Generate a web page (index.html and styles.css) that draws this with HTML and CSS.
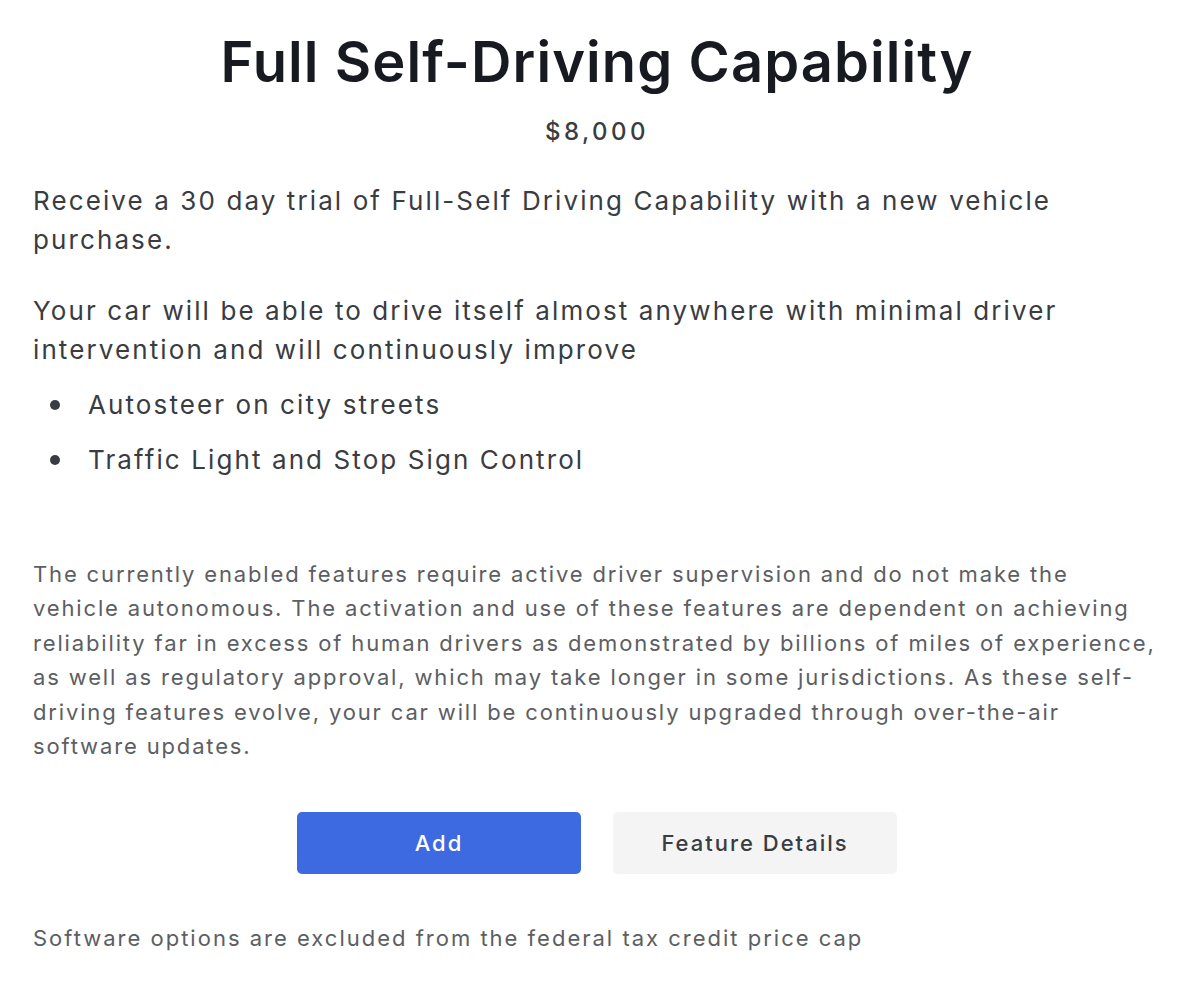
FILE: index.html
```html
<!DOCTYPE html>
<html lang="en">
<head>
<meta charset="utf-8">
<title>Full Self-Driving Capability</title>
<link rel="stylesheet" href="styles.css">
</head>
<body>
<main class="page">
  <h1 class="title">Full Self-Driving Capability</h1>
  <div class="price">$8,000</div>
  <p class="lead">Receive a 30 day trial of Full-Self Driving Capability with a new vehicle purchase.</p>
  <p class="lead second">Your car will be able to drive itself almost anywhere with minimal driver intervention and will continuously improve</p>
  <ul class="features">
    <li>Autosteer on city streets</li>
    <li>Traffic Light and Stop Sign Control</li>
  </ul>
  <p class="disclaimer">The currently enabled features require active driver supervision and do not make the<br>vehicle autonomous. The activation and use of these features are dependent on achieving reliability far in excess of human drivers as demonstrated by billions of miles of experience, as well as regulatory approval, which may take longer in some jurisdictions. As these self-driving features evolve, your car will be continuously upgraded through over-the-air<br>software updates.</p>
  <div class="actions">
    <button class="btn btn-primary">Add</button>
    <button class="btn btn-secondary">Feature Details</button>
  </div>
  <p class="note">Software options are excluded from the federal tax credit price cap</p>
</main>
</body>
</html>
```
FILE: styles.css
```css
html, body {
  margin: 0;
  padding: 0;
  background: #ffffff;
}
body {
  font-family: Inter, "Noto Sans", "Liberation Sans", sans-serif;
  color: #393c41;
}
.page {
  width: 1128px;
  padding: 29px 39px 0 33px;
}
.title {
  margin: 0;
  font-size: 56px;
  line-height: 66px;
  font-weight: 600;
  letter-spacing: 1.1px;
  color: #171a20;
  text-align: center;
}
.price {
  margin-top: 21px;
  font-size: 24px;
  line-height: 32px;
  font-weight: 500;
  letter-spacing: 3.5px;
  text-align: center;
  color: #393c41;
}
.lead {
  margin: 33px 0 0;
  font-size: 26px;
  line-height: 39px;
  letter-spacing: 2.1px;
  color: #393c41;
}
.lead.second {
  margin-top: 32px;
}
.features {
  list-style: none;
  margin: 16px 0 0;
  padding: 0;
}
.features li {
  display: flex;
  align-items: center;
  font-size: 26px;
  line-height: 39px;
  letter-spacing: 2.1px;
  margin-bottom: 16px;
}
.features li:last-child {
  margin-bottom: 0;
}
.features li::before {
  content: "";
  width: 10px;
  height: 10px;
  border-radius: 50%;
  background: #393c41;
  margin-left: 17px;
  margin-right: 28px;
  flex: none;
}
.disclaimer {
  margin: 78px -15px 0 0;
  font-size: 22px;
  line-height: 34.4px;
  letter-spacing: 1.85px;
  color: #5c5e62;
}
.actions {
  margin-top: 49px;
  display: flex;
  justify-content: center;
  gap: 32px;
}
.btn {
  width: 284px;
  height: 62px;
  border: none;
  border-radius: 5px;
  font-family: inherit;
  font-size: 22px;
  font-weight: 500;
  letter-spacing: 2px;
  cursor: pointer;
}
.btn-primary {
  background: #3e6ae1;
  color: #ffffff;
}
.btn-secondary {
  background: #f4f4f4;
  color: #393c41;
}
.note {
  margin: 47px 0 0;
  font-size: 22px;
  line-height: 34px;
  letter-spacing: 2px;
  color: #5c5e62;
}
```
